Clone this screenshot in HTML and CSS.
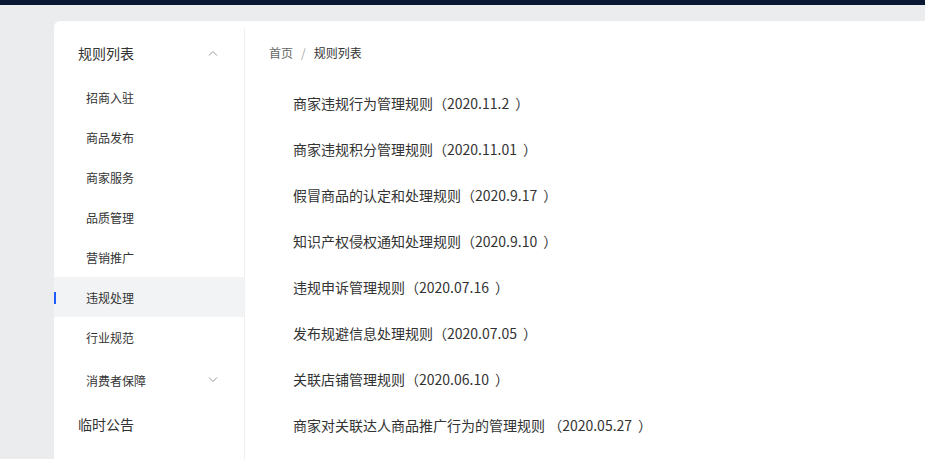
FILE: index.html
```html
<!DOCTYPE html>
<html lang="zh-CN">
<head>
    <meta charset="UTF-8">
    <meta name="viewport" content="width=device-width, initial-scale=1.0">
    <title>规则列表</title>
    <link rel="stylesheet" href="styles.css">
</head>
<body>
    <div class="topbar"></div>
    <div class="page">
        <div class="card">
            <!-- 左侧菜单 -->
            <aside class="sidebar">
                <div class="menu-title">
                    <span>规则列表</span>
                    <svg class="arrow" width="10" height="6" viewBox="0 0 10 6"><path d="M1 5.5 L5 1.5 L9 5.5" fill="none" stroke="#999" stroke-width="1"/></svg>
                </div>
                <div class="menu-item">招商入驻</div>
                <div class="menu-item">商品发布</div>
                <div class="menu-item">商家服务</div>
                <div class="menu-item">品质管理</div>
                <div class="menu-item">营销推广</div>
                <div class="menu-item active">违规处理</div>
                <div class="menu-item">行业规范</div>
                <div class="menu-item sub-title">
                    <span>消费者保障</span>
                    <svg class="arrow" width="10" height="6" viewBox="0 0 10 6"><path d="M1 0.5 L5 4.5 L9 0.5" fill="none" stroke="#999" stroke-width="1"/></svg>
                </div>
                <div class="menu-title last">临时公告</div>
            </aside>

            <!-- 内容 -->
            <main class="content">
                <div class="breadcrumb">
                    <span class="crumb-link">首页</span>
                    <span class="sep">/</span>
                    <span class="crumb-current">规则列表</span>
                </div>
                <ul class="rule-list">
                    <li>商家违规行为管理规则（<span class="num">2020.11.2</span>）</li>
                    <li>商家违规积分管理规则（<span class="num">2020.11.01</span>）</li>
                    <li>假冒商品的认定和处理规则（<span class="num">2020.9.17</span>）</li>
                    <li>知识产权侵权通知处理规则（<span class="num">2020.9.10</span>）</li>
                    <li>违规申诉管理规则（<span class="num">2020.07.16</span>）</li>
                    <li>发布规避信息处理规则（<span class="num">2020.07.05</span>）</li>
                    <li>关联店铺管理规则（<span class="num">2020.06.10</span>）</li>
                    <li>商家对关联达人商品推广行为的管理规则 （<span class="num">2020.05.27</span>）</li>
                </ul>
            </main>
        </div>
    </div>
</body>
</html>
```

FILE: styles.css
```css
body {
    margin: 0;
    padding: 0;
    font-family: "Noto Sans CJK SC", "Noto Sans", sans-serif;
    background-color: #ebecee;
    color: #333;
    overflow: hidden;
}
.topbar {
    height: 5px;
    background-color: #0b1834;
}
.page {
    padding: 16px 0 0 54px;
}
.card {
    display: flex;
    background-color: #fff;
    border-top-left-radius: 6px;
    min-height: 460px;
}
.sidebar {
    width: 190px;
    flex-shrink: 0;
    margin-top: 8px;
    border-right: 1px solid #eeeff1;
}
.menu-title {
    height: 48px;
    display: flex;
    align-items: center;
    justify-content: space-between;
    padding: 0 26px 0 24px;
    font-size: 14px;
    color: #333;
}
.menu-title.last {
    height: 42px;
}
.menu-item {
    position: relative;
    height: 40px;
    display: flex;
    align-items: center;
    justify-content: space-between;
    padding: 0 26px 0 32px;
    font-size: 12px;
    color: #333;
}
.menu-item.sub-title {
    height: 46px;
}
.menu-item.active {
    background-color: #f2f3f5;
}
.menu-item.active::before {
    content: "";
    position: absolute;
    left: 0;
    top: 15px;
    width: 2px;
    height: 12px;
    background-color: #1f5cff;
}
.content {
    flex: 1;
    padding: 22px 24px 0 24px;
}
.breadcrumb {
    height: 20px;
    line-height: 20px;
    font-size: 12px;
    display: flex;
    gap: 8px;
}
.crumb-link {
    color: #666;
}
.sep {
    color: #aaa;
}
.crumb-current {
    color: #333;
}
.rule-list {
    list-style: none;
    margin: 17px 0 0 0;
    padding: 0 0 0 24px;
}
.rule-list li {
    height: 46px;
    line-height: 46px;
    font-size: 14px;
    color: #333;
}
.num {
    margin-right: 6px;
}
```
